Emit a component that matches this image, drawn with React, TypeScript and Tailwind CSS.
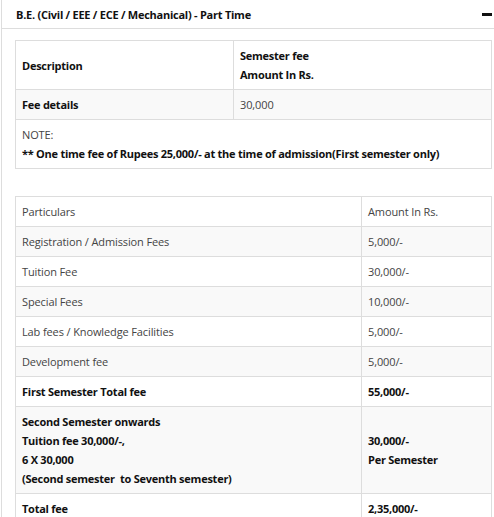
type Row = { label: string[]; amount: string[]; bold?: boolean };

const particulars: Row[] = [
  { label: ["Registration / Admission Fees"], amount: ["5,000/-"] },
  { label: ["Tuition Fee"], amount: ["30,000/-"] },
  { label: ["Special Fees"], amount: ["10,000/-"] },
  { label: ["Lab fees / Knowledge Facilities"], amount: ["5,000/-"] },
  { label: ["Development fee"], amount: ["5,000/-"] },
  { label: ["First Semester Total fee"], amount: ["55,000/-"], bold: true },
  {
    label: [
      "Second Semester onwards",
      "Tuition fee 30,000/-,",
      "6 X 30,000",
      "(Second semester\u00a0 to Seventh semester)",
    ],
    amount: ["30,000/-", "Per Semester"],
    bold: true,
  },
  { label: ["Total fee"], amount: ["2,35,000/-"], bold: true },
];

const cell = "border border-[#dddddd] px-[6px] py-[5px] align-middle";
const strong = "font-bold text-[#111] tracking-[-0.25px]";

export default function App() {
  return (
    <div
      className="w-[494px] min-h-[517px] bg-white text-[11px] leading-[19px] tracking-[-0.12px] text-[#444]"
      style={{ fontFamily: '"Open Sans", "Liberation Sans", sans-serif' }}
    >
      <div className="ml-[1px] border-l border-[#dddddd]">
        <div className="flex h-[29px] items-center justify-between border-b border-[#dddddd] pl-[14px] pr-[1px]">
          <h3 className={`text-[11px] ${strong}`}>
            B.E. (Civil / EEE / ECE / Mechanical) - Part Time
          </h3>
          <span className="mr-[1px] h-[3px] w-[10px] bg-[#111]" />
        </div>

        <div className="pl-[13px] pr-[2px] pt-[11px] pb-[20px]">
          <table className="w-full border-collapse">
            <tbody>
              <tr className="bg-white">
                <td className={`${cell} w-[218px] ${strong}`}>Description</td>
                <td className={`${cell} ${strong}`}>
                  <p>Semester fee</p>
                  <p>Amount In Rs.</p>
                </td>
              </tr>
              <tr className="bg-[#f9f9f9]">
                <td className={`${cell} ${strong}`}>Fee details</td>
                <td className={cell}>30,000</td>
              </tr>
              <tr className="bg-white">
                <td className={cell} colSpan={2}>
                  <p>NOTE:</p>
                  <p className={strong}>
                    ** One time fee of Rupees 25,000/- at the time of admission(First semester only)
                  </p>
                </td>
              </tr>
            </tbody>
          </table>

          <table className="mt-[27px] w-full border-collapse">
            <tbody>
              <tr className="bg-white">
                <td className={cell}>Particulars</td>
                <td className={`${cell} w-[130px]`}>Amount In Rs.</td>
              </tr>
              {particulars.map((row, i) => (
                <tr
                  key={row.label[0]}
                  className={i % 2 === 0 ? "bg-[#f9f9f9]" : "bg-white"}
                >
                  <td className={`${cell} ${row.bold ? strong : ""}`}>
                    {row.label.map((line) => (
                      <p key={line}>{line}</p>
                    ))}
                  </td>
                  <td className={`${cell} ${row.bold ? strong : ""}`}>
                    {row.amount.map((line) => (
                      <p key={line}>{line}</p>
                    ))}
                  </td>
                </tr>
              ))}
            </tbody>
          </table>
        </div>
      </div>
    </div>
  );
}
